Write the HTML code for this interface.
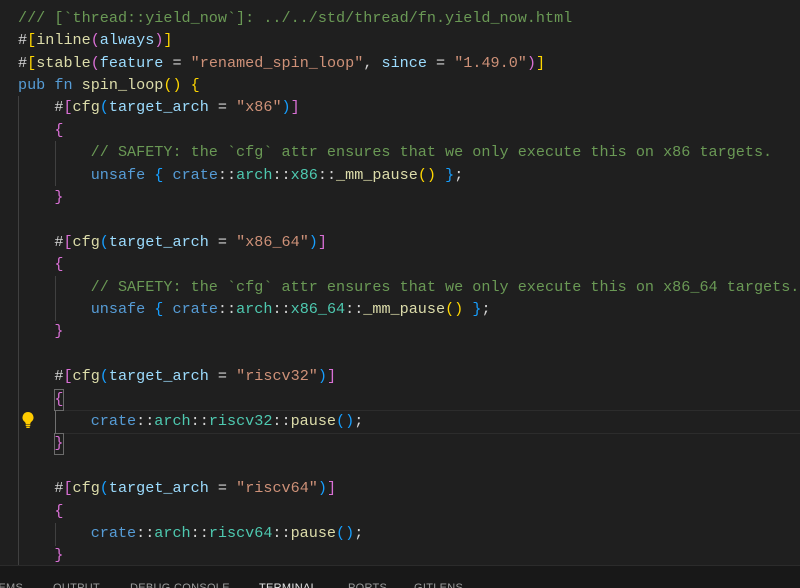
<!DOCTYPE html>
<html><head><meta charset="utf-8"><style>
html,body{margin:0;padding:0;width:800px;height:587px;overflow:hidden;background:#1f1f1f}
.ed{position:absolute;left:0;top:0;width:800px;height:565px;overflow:hidden;background:#1f1f1f}
.l{position:absolute;left:18px;height:22.4px;line-height:22.4px;white-space:pre;font-family:"Liberation Mono",monospace;font-size:15.15px;color:#d4d4d4}
.c{color:#6a9955}.k{color:#569cd6}.f{color:#dcdcaa}.v{color:#9cdcfe}.s{color:#ce9178}.t{color:#4ec9b0}
.g{color:#ffd700}.p{color:#da70d6}.b{color:#179fff}
.guide{position:absolute;width:1px;background:#404040}
.panel{position:absolute;left:0;top:565px;width:800px;height:22px;background:#181818;border-top:1px solid #2b2b2b;overflow:hidden}
.tab{position:absolute;top:16px;font-family:"Liberation Sans",sans-serif;font-size:11px;color:#9d9d9d;letter-spacing:.3px}
.box{position:absolute;border:1px solid #6b6b6b;width:8px;height:20px}
</style></head><body>
<div class="ed">
<div style="position:absolute;left:55px;right:0;top:410px;height:22px;border-top:1px solid #2c2c2c;border-bottom:1px solid #2c2c2c"></div>
<div class="guide" style="left:18px;top:96px;height:469px"></div>
<div class="guide" style="left:55px;top:141px;height:45px"></div>
<div class="guide" style="left:55px;top:276px;height:45px"></div>
<div class="guide" style="left:55px;top:410px;height:23px;background:#707070"></div>
<div class="guide" style="left:55px;top:523px;height:23px"></div>
<div class="box" style="left:54px;top:389px"></div>
<div class="box" style="left:54px;top:433px"></div>
<svg style="position:absolute;left:21px;top:411px" width="14" height="18" viewBox="0 0 14 18"><path d="M7 1a5.5 5.5 0 0 0-3.3 9.9c.7.6 1 1.3 1 2.1h4.6c0-.8.3-1.5 1-2.1A5.5 5.5 0 0 0 7 1z" fill="#ffcc00"/><rect x="4.7" y="13.5" width="4.6" height="1.6" fill="#ffcc00"/><rect x="5.3" y="15.6" width="3.4" height="1.4" fill="#ffcc00"/></svg>
<div class="l c" style="top:-15.6px">///</div>
<div class="l c" style="top:6.8px">/// [`thread::yield_now`]: ../../std/thread/fn.yield_now.html</div>
<div class="l" style="top:29.2px">#<span class="g">[</span><span class="f">inline</span><span class="p">(</span><span class="v">always</span><span class="p">)</span><span class="g">]</span></div>
<div class="l" style="top:51.6px">#<span class="g">[</span><span class="f">stable</span><span class="p">(</span><span class="v">feature</span> = <span class="s">"renamed_spin_loop"</span>, <span class="v">since</span> = <span class="s">"1.49.0"</span><span class="p">)</span><span class="g">]</span></div>
<div class="l" style="top:74px"><span class="k">pub</span> <span class="k">fn</span> <span class="f">spin_loop</span><span class="g">()</span> <span class="g">{</span></div>
<div class="l" style="top:96.4px">    #<span class="p">[</span><span class="f">cfg</span><span class="b">(</span><span class="v">target_arch</span> = <span class="s">"x86"</span><span class="b">)</span><span class="p">]</span></div>
<div class="l" style="top:118.8px">    <span class="p">{</span></div>
<div class="l c" style="top:141.2px">        // SAFETY: the `cfg` attr ensures that we only execute this on x86 targets.</div>
<div class="l" style="top:163.6px">        <span class="k">unsafe</span> <span class="b">{</span> <span class="k">crate</span>::<span class="t">arch</span>::<span class="t">x86</span>::<span class="f">_mm_pause</span><span class="g">()</span> <span class="b">}</span>;</div>
<div class="l" style="top:186px">    <span class="p">}</span></div>
<div class="l" style="top:230.8px">    #<span class="p">[</span><span class="f">cfg</span><span class="b">(</span><span class="v">target_arch</span> = <span class="s">"x86_64"</span><span class="b">)</span><span class="p">]</span></div>
<div class="l" style="top:253.2px">    <span class="p">{</span></div>
<div class="l c" style="top:275.6px">        // SAFETY: the `cfg` attr ensures that we only execute this on x86_64 targets.</div>
<div class="l" style="top:298px">        <span class="k">unsafe</span> <span class="b">{</span> <span class="k">crate</span>::<span class="t">arch</span>::<span class="t">x86_64</span>::<span class="f">_mm_pause</span><span class="g">()</span> <span class="b">}</span>;</div>
<div class="l" style="top:320.4px">    <span class="p">}</span></div>
<div class="l" style="top:365.2px">    #<span class="p">[</span><span class="f">cfg</span><span class="b">(</span><span class="v">target_arch</span> = <span class="s">"riscv32"</span><span class="b">)</span><span class="p">]</span></div>
<div class="l" style="top:387.6px">    <span class="p">{</span></div>
<div class="l" style="top:410px">        <span class="k">crate</span>::<span class="t">arch</span>::<span class="t">riscv32</span>::<span class="f">pause</span><span class="b">()</span>;</div>
<div class="l" style="top:432.4px">    <span class="p">}</span></div>
<div class="l" style="top:477.2px">    #<span class="p">[</span><span class="f">cfg</span><span class="b">(</span><span class="v">target_arch</span> = <span class="s">"riscv64"</span><span class="b">)</span><span class="p">]</span></div>
<div class="l" style="top:499.6px">    <span class="p">{</span></div>
<div class="l" style="top:522px">        <span class="k">crate</span>::<span class="t">arch</span>::<span class="t">riscv64</span>::<span class="f">pause</span><span class="b">()</span>;</div>
<div class="l" style="top:544.4px">    <span class="p">}</span></div>
</div>
<div class="panel">
<div class="tab" style="left:-8px">LEMS</div>
<div class="tab" style="left:53px">OUTPUT</div>
<div class="tab" style="left:130px">DEBUG CONSOLE</div>
<div class="tab" style="left:259px;color:#e7e7e7">TERMINAL</div>
<div class="tab" style="left:348px">PORTS</div>
<div class="tab" style="left:414px">GITLENS</div>
</div>
</body></html>
